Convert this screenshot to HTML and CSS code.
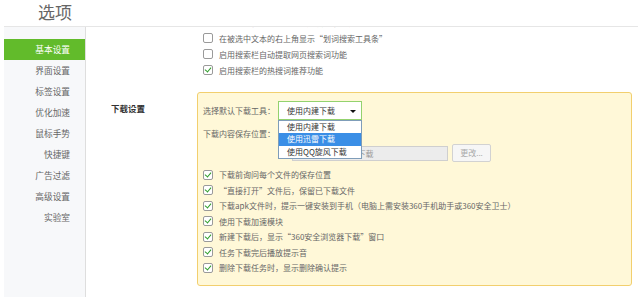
FILE: index.html
```html
<!DOCTYPE html>
<html lang="zh-CN">
<head>
    <meta charset="UTF-8">
    <title>选项</title>
    <link rel="stylesheet" href="styles.css">
</head>
<body>
    <header class="top">
        <h1>选项</h1>
    </header>
    <div class="wrap">
        <nav class="side">
            <a class="active">基本设置</a>
            <a>界面设置</a>
            <a>标签设置</a>
            <a>优化加速</a>
            <a>鼠标手势</a>
            <a>快捷键</a>
            <a>广告过滤</a>
            <a>高级设置</a>
            <a>实验室</a>
        </nav>
        <main class="main">
            <div class="group scrolled">
                <div class="chk"><span class="box"></span>在地址栏输入时显示搜索建议的下拉提示列表</div>
                <div class="chk"><span class="box"></span>在被选中文本的右上角显示“划词搜索工具条”</div>
                <div class="chk"><span class="box"></span>启用搜索栏自动提取网页搜索词功能</div>
                <div class="chk"><span class="box on"></span>启用搜索栏的热搜词推荐功能</div>
            </div>
            <section class="sect">
                <h2 class="sect-title">下载设置</h2>
                <div class="panel">
                    <div class="row">
                        <span class="lbl">选择默认下载工具：</span>
                        <div class="select">
                            <span>使用内建下载</span>
                            <i class="arrow"></i>
                            <ul class="dropdown">
                                <li>使用内建下载</li>
                                <li class="hl">使用迅雷下载</li>
                                <li>使用QQ旋风下载</li>
                            </ul>
                        </div>
                    </div>
                    <div class="row path-row">
                        <span class="lbl">下载内容保存位置：</span>
                        <div class="path">
                            <span class="input">C:\Users\Public\下载</span>
                            <span class="btn">更改...</span>
                        </div>
                    </div>
                    <div class="group">
                        <div class="chk"><span class="box on"></span>下载前询问每个文件的保存位置</div>
                        <div class="chk"><span class="box on"></span>“直接打开”文件后，保留已下载文件</div>
                        <div class="chk"><span class="box on"></span>下载apk文件时，提示一键安装到手机（电脑上需安装360手机助手或360安全卫士）</div>
                        <div class="chk"><span class="box on"></span>使用下载加速模块</div>
                        <div class="chk"><span class="box on"></span>新建下载后，显示“360安全浏览器下载”窗口</div>
                        <div class="chk"><span class="box on"></span>任务下载完后播放提示音</div>
                        <div class="chk"><span class="box on"></span>删除下载任务时，显示删除确认提示</div>
                    </div>
                </div>
            </section>
        </main>
    </div>
</body>
</html>
```

FILE: styles.css
```css
* { padding: 0; margin: 0; box-sizing: border-box; }
body {
    font-family: "Noto Sans CJK SC", "Liberation Sans", sans-serif;
    background: #fff;
    color: #666;
    width: 638px;
    height: 299px;
    overflow: hidden;
}
.top {
    height: 27px;
    margin-left: 4px;
    border-bottom: 1px solid #e6e6e6;
    position: relative;
    z-index: 2;
    background: #fff;
}
.top h1 {
    font-size: 17px;
    font-weight: normal;
    color: #666;
    line-height: 24px;
    padding-left: 34px;
}
.wrap {
    display: flex;
    height: 270px;
}
.side {
    width: 82px;
    margin-left: 4px;
    background: #f7f8fa;
    border-right: 1px solid #dedede;
    padding-top: 12px;
}
.side a {
    display: block;
    height: 21px;
    line-height: 21px;
    font-size: 8.7px;
    text-align: right;
    padding-right: 15px;
    color: #666;
}
.side a.active {
    background: #62bb2b;
    color: #fff;
}
.main {
    flex: 1;
    overflow: hidden;
}
.group.scrolled {
    margin-top: -13px;
    margin-left: 111px;
    padding-left: 6px;
}
.chk {
    display: flex;
    align-items: center;
    height: 16px;
    font-size: 8px;
    color: #666;
    white-space: nowrap;
}
.panel .chk {
    height: 15.5px;
}
.box {
    width: 10px;
    height: 10px;
    border: 1px solid #9a9a9a;
    border-radius: 2px;
    background: #fff;
    margin-right: 6px;
    flex: none;
    position: relative;
}
.box.on::after {
    content: "";
    position: absolute;
    left: 2px;
    top: 0px;
    width: 3px;
    height: 5px;
    border-right: 1.6px solid #2e9e2a;
    border-bottom: 1.6px solid #2e9e2a;
    transform: rotate(40deg);
}
.sect {
    display: flex;
    margin-top: 14px;
    padding-left: 25px;
}
.sect-title {
    width: 86px;
    font-size: 8.5px;
    font-weight: bold;
    color: #333;
    line-height: 12px;
    margin-top: 10px;
}
.panel {
    width: 435px;
    background: #fff8d8;
    border: 1px solid #f2cf6e;
    border-radius: 3px;
    padding: 8px 5px 9px 5px;
}
.row {
    display: flex;
    align-items: center;
    font-size: 8px;
}
.lbl {
    width: 72px;
    line-height: 19px;
    color: #666;
    white-space: nowrap;
}
.select {
    position: relative;
    width: 84px;
    height: 19px;
    margin-left: 3px;
    border: 1px solid #93d26e;
    background: #fff;
    line-height: 17px;
    padding-left: 8px;
    color: #333;
}
.arrow {
    position: absolute;
    right: 5px;
    top: 8px;
    border-left: 3px solid transparent;
    border-right: 3px solid transparent;
    border-top: 3px solid #111;
}
.dropdown {
    position: absolute;
    left: -1px;
    top: 18px;
    width: 84px;
    list-style: none;
    background: #fff;
    border: 1px solid #7f9db9;
    z-index: 3;
}
.dropdown li {
    height: 12.3px;
    line-height: 12px;
    padding-left: 8px;
    color: #333;
}
.dropdown li.hl {
    background: #3a8ee6;
    color: #fff;
}
.path-row {
    align-items: flex-start;
    margin-top: 8px;
}
.path-row .lbl {
    line-height: 12px;
}
.path {
    display: flex;
    align-items: center;
    margin-left: 17px;
    margin-top: 16px;
}
.input {
    width: 156px;
    height: 15px;
    line-height: 13px;
    background: #ececec;
    border: 1px solid #cfcfcf;
    padding-left: 4px;
    color: #999;
    white-space: nowrap;
    overflow: hidden;
}
.btn {
    width: 39px;
    height: 18px;
    line-height: 16px;
    margin-left: 4px;
    text-align: center;
    background: #f6f6f6;
    border: 1px solid #d2d2d2;
    border-radius: 2px;
    color: #aaa;
}
.panel .group {
    margin-top: 5px;
}
```
